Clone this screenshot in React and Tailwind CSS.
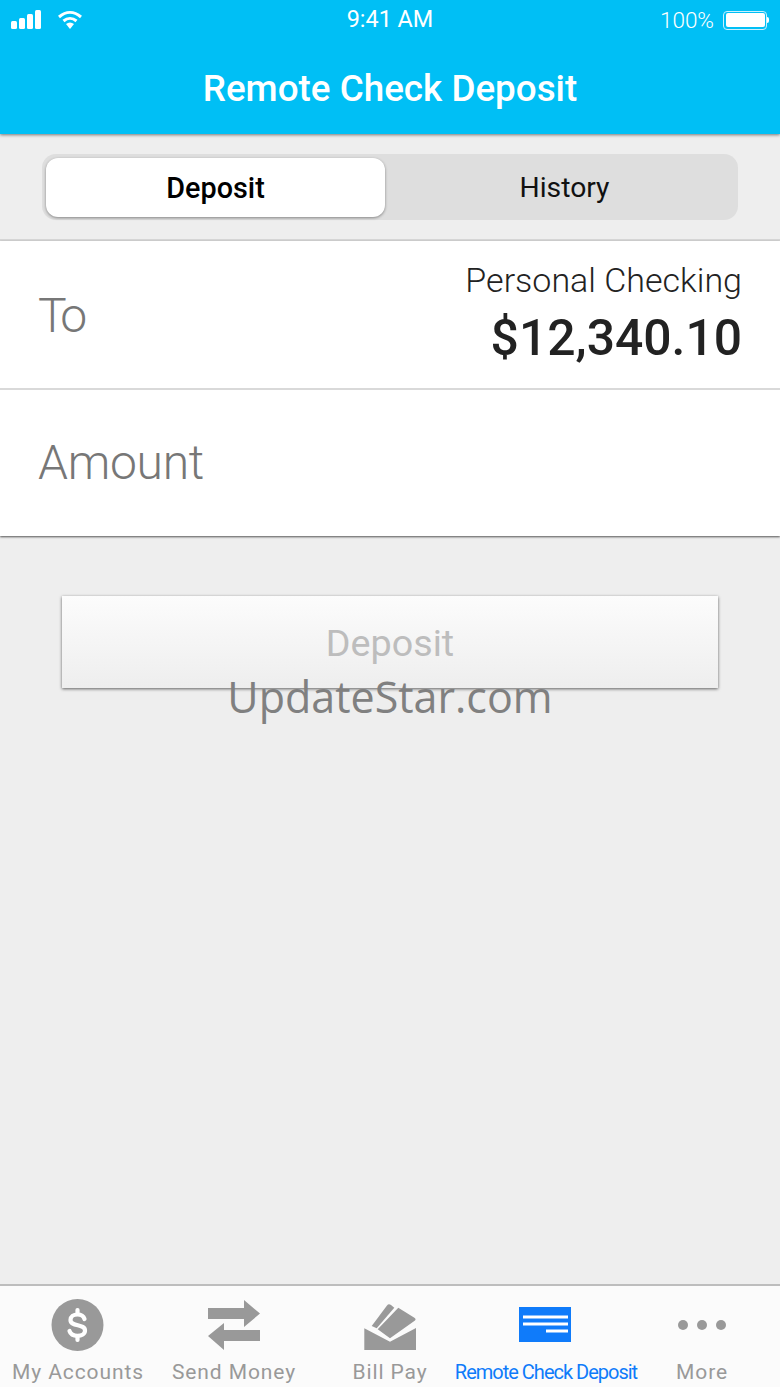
const font = "font-['Roboto',sans-serif]";

function TabIcon({ name }) {
	if (name === "dollar") {
		return (
			<svg width="54" height="54" viewBox="0 0 54 54">
				<circle cx="26.5" cy="27" r="26" fill="#999999" />
				<path
					d="M33.5 21C32.5 17.8 30 16.5 26.5 16.5C22.5 16.5 19.5 18.5 19.5 22C19.5 29 34 25.5 34 32.5C34 36 30.5 37.8 26.5 37.8C22.5 37.8 19.5 36 18.5 33"
					fill="none"
					stroke="#fff"
					strokeWidth="4.2"
					strokeLinecap="round"
				/>
				<rect x="24.4" y="10" width="4.2" height="7" rx="2" fill="#fff" />
				<rect x="24.4" y="37" width="4.2" height="7" rx="2" fill="#fff" />
			</svg>
		);
	}
	if (name === "arrows") {
		return (
			<svg width="54" height="54" viewBox="0 0 54 54">
				<path d="M1 10H37V2L53 15.5L37 29V21H1Z" fill="#999999" />
				<path d="M53 32H17V25L1 38L17 52V43H53Z" fill="#999999" />
			</svg>
		);
	}
	if (name === "bill") {
		return (
			<svg width="54" height="54" viewBox="0 0 54 54">
				<path d="M24 7.5Q25.5 5.5 28 7L31.3 9.7L13.7 30.3L8.7 28Z" fill="#999999" />
				<path d="M35.3 9.7L51 19.5Q53.5 21 52 22.5L27 40.3L14.7 31.3Z" fill="#999999" />
				<path d="M1.3 30.3L27 43.7L53 30V52H1.3Z" fill="#999999" />
			</svg>
		);
	}
	if (name === "check") {
		return (
			<svg width="54" height="36" viewBox="0 0 54 36">
				<rect width="52" height="35" x="0" fill="#0f7bfa" />
				<rect x="4" y="8.5" width="45" height="3" fill="#fff" />
				<rect x="4" y="15.5" width="45" height="3" fill="#fff" />
				<rect x="27" y="22.5" width="22" height="3" fill="#fff" />
			</svg>
		);
	}
	return (
		<div className="flex gap-[8.5px]">
			<div className="w-[10.5px] h-[10.5px] rounded-full bg-[#999999]" />
			<div className="w-[10.5px] h-[10.5px] rounded-full bg-[#999999]" />
			<div className="w-[10.5px] h-[10.5px] rounded-full bg-[#999999]" />
		</div>
	);
}

const tabs = [
	{ label: "My Accounts", icon: "dollar" },
	{ label: "Send Money", icon: "arrows" },
	{ label: "Bill Pay", icon: "bill" },
	{ label: "Remote Check Deposit", icon: "check", active: true },
	{ label: "More", icon: "more" },
];

export default function App() {
	return (
		<div className={`relative w-[780px] h-[1387px] flex flex-col bg-[#eeeeee] overflow-hidden ${font}`}>
			{/* Header */}
			<div className="h-[134px] bg-[#00bff5] shadow-[0_1px_3px_rgba(0,0,0,0.5)] z-10 text-white flex flex-col shrink-0">
				<div className="h-[40px] px-[11px] flex items-center justify-between relative">
					<div className="flex items-center gap-[15px]">
						<svg width="31" height="20" viewBox="0 0 31 20">
							<rect x="0" y="11" width="6" height="8" rx="1.5" fill="#fff" />
							<rect x="8" y="8" width="6" height="11" rx="1.5" fill="#fff" />
							<rect x="16" y="4" width="6" height="15" rx="1.5" fill="#fff" />
							<rect x="24" y="0" width="6" height="19" rx="1.5" fill="#fff" />
						</svg>
						<svg width="26" height="20" viewBox="0 0 26 20" fill="none">
							<path d="M2 7C9 1 17 1 24 7" stroke="#fff" strokeWidth="3" />
							<path d="M6.5 11C10.5 7.5 15.5 7.5 19.5 11" stroke="#fff" strokeWidth="3" />
							<path d="M9 14C11.5 12 14.5 12 17 14L13 19Z" fill="#fff" />
						</svg>
					</div>
					<span className="absolute left-0 right-0 text-center text-[23.4px] leading-none">9:41 AM</span>
					<div className="flex items-center gap-[9px]">
						<span className="text-[22.5px] leading-none font-light">100%</span>
						<div className="flex items-center">
							<div className="w-[44px] h-[19px] rounded-[4px] border border-[#c8f0ff] p-[1.5px]">
								<div className="w-full h-full rounded-[2px] bg-white" />
							</div>
							<div className="w-[2px] h-[6px] rounded-r-full bg-white" />
						</div>
					</div>
				</div>
				<div className="flex-1 flex items-center justify-center pt-[4px] text-[36.8px] font-medium leading-none">
					Remote Check Deposit
				</div>
			</div>

			{/* Segmented control */}
			<div className="h-[107px] px-[42px] pt-[20px] border-b-2 border-[#d6d6d6] bg-[#eeeeee] shrink-0">
				<div className="h-[66px] w-[696px] p-[4px] rounded-[14px] bg-[#dedede] flex">
					<div className="w-[339px] h-[59px] pt-[2px] rounded-[12px] bg-white shadow-[0_1px_3px_rgba(0,0,0,0.4)] flex items-center justify-center text-[28.8px] font-medium text-black">
						Deposit
					</div>
					<div className="flex-1 h-[59px] pt-[2px] pl-[10px] flex items-center justify-center text-[28.3px] text-[#111111]">
						History
					</div>
				</div>
			</div>

			{/* Rows */}
			<div className="bg-white shadow-[0_1px_2px_rgba(0,0,0,0.65)] shrink-0">
				<div className="h-[149px] pl-[38px] pr-[38px] flex items-center justify-between border-b-2 border-[#d9d9d9]">
					<span className="pt-[2px] text-[48px] font-light tracking-[-4px] text-[#777777]">To</span>
					<div className="text-right pb-[4px]">
						<div className="text-[34px] leading-[44px] font-light text-[#222222]">Personal Checking</div>
						<div className="mt-[7px] text-[49.8px] leading-[58px] font-medium text-[#222222]">$12,340.10</div>
					</div>
				</div>
				<div className="h-[146px] pl-[38px] flex items-center">
					<span className="text-[48px] font-light tracking-[-0.3px] text-[#777777]">Amount</span>
				</div>
			</div>

			{/* Deposit button */}
			<div className="flex-1 px-[62px] pt-[60px]">
				<div className="h-[92px] pt-[2px] bg-gradient-to-b from-[#fcfcfc] to-[#eeeeee] shadow-[0_1px_3px_rgba(0,0,0,0.6)] flex items-center justify-center text-[37.7px] text-[#bdbdbd]">
					Deposit
				</div>
			</div>

			{/* Tab bar */}
			<div className="h-[103px] bg-[#fbfbfb] border-t-2 border-[#bdbdbd] grid grid-cols-5 shrink-0">
				{tabs.map((t) => (
					<div key={t.label} className="min-w-0 flex flex-col items-center">
						<div className="h-[74px] pt-[4px] flex items-center justify-center">
							<TabIcon name={t.icon} />
						</div>
						<span
							className={
								t.active
									? "text-[20px] leading-[24px] tracking-[-1px] text-[#0f7bfa] whitespace-nowrap"
									: "text-[21px] leading-[24px] tracking-[0.9px] text-[#999999] whitespace-nowrap"
							}
						>
							{t.label}
						</span>
					</div>
				))}
			</div>

			{/* Watermark */}
			<div className="absolute left-0 right-0 top-[665px] text-center text-[43px] leading-[64px] text-[#808080] font-['Open_Sans',sans-serif] z-20">
				UpdateStar.com
			</div>
		</div>
	);
}
